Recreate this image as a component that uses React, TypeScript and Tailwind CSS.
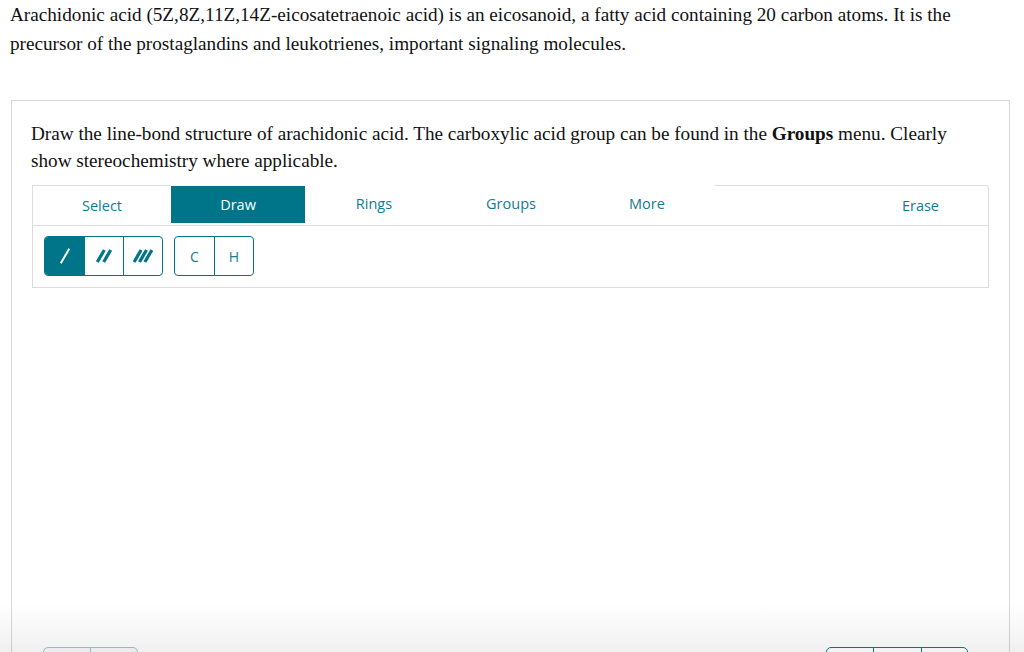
import React from "react";

const TEAL = "#00758a";

function BondIcon({ n, color }: { n: number; color: string }) {
  const offsets = n === 1 ? [0] : n === 2 ? [-3.2, 3.2] : [-5.4, 0, 5.4];
  const sw = n === 1 ? 2 : 3.2;
  const len = n === 1 ? 17 : 14;
  return (
    <svg width="26" height="26" viewBox="0 0 26 26">
      {offsets.map((o, i) => {
        const cx = 13 + o;
        const cy = 13;
        const dx = len * 0.5 * 0.5;
        const dy = len * 0.5 * 0.866;
        return (
          <line
            key={i}
            x1={cx - dx}
            y1={cy + dy}
            x2={cx + dx}
            y2={cy - dy}
            stroke={color}
            strokeWidth={sw}
            strokeLinecap="butt"
          />
        );
      })}
    </svg>
  );
}

export default function App() {
  const serif = { fontFamily: '"Liberation Serif", "Times New Roman", serif' };
  const sans = { fontFamily: '"Open Sans", "Noto Sans", sans-serif' };
  return (
    <div className="relative h-[652px] w-[1024px] overflow-hidden bg-white">
      <p
        className="pl-[10px] pr-[40px] text-[19.2px] leading-[29px] text-[#111]"
        style={serif}
      >
        Arachidonic acid (5Z,8Z,11Z,14Z-eicosatetraenoic acid) is an eicosanoid, a fatty acid containing 20 carbon atoms. It is the precursor of the prostaglandins and leukotrienes, important signaling molecules.
      </p>

      <div className="ml-[11px] mt-[42px] h-[700px] w-[999px] border border-[#d6d6d6] px-[20px] pt-[19px]">
        <p
          className="-ml-px pr-[30px] text-[19.2px] leading-[27px] text-[#111]"
          style={serif}
        >
          Draw the line-bond structure of arachidonic acid. The carboxylic acid group can be found in the <b>Groups</b> menu. Clearly show stereochemistry where applicable.
        </p>

        <div className="mt-[11px]" style={sans}>
          <div className="flex h-[41px] rounded-tr-[3px] border-b border-l border-r border-[#dcdcdc] text-[14.5px] text-[#137b91]">
            <div className="flex w-[138px] items-center justify-center border-t border-[#dcdcdc]">
              Select
            </div>
            <div className="mt-px flex h-[37px] w-[134px] items-center justify-center bg-[#00758a] text-white">
              Draw
            </div>
            <div className="flex w-[138px] items-center justify-center pb-[2px]">Rings</div>
            <div className="flex w-[136px] items-center justify-center pb-[2px]">Groups</div>
            <div className="flex w-[136px] items-center justify-center pb-[2px]">More</div>
            <div className="flex flex-1 items-center justify-end rounded-tr-[3px] border-t border-[#dcdcdc] pr-[49px]">
              Erase
            </div>
          </div>
          <div className="flex h-[62px] items-start gap-[11px] border-b border-l border-r border-[#dcdcdc] pl-[11px] pt-[10px]">
            <div className="flex h-[40px] overflow-hidden rounded-[4px] border border-[#00758a]">
              <div className="flex w-[39px] items-center justify-center bg-[#00758a]">
                <BondIcon n={1} color="#ffffff" />
              </div>
              <div className="flex w-[39px] items-center justify-center border-l border-[#00758a]">
                <BondIcon n={2} color={TEAL} />
              </div>
              <div className="flex w-[39px] items-center justify-center border-l border-[#00758a]">
                <BondIcon n={3} color={TEAL} />
              </div>
            </div>
            <div className="flex h-[40px] overflow-hidden rounded-[4px] border border-[#00758a] text-[14px] text-[#137b91]">
              <div className="flex w-[39px] items-center justify-center">C</div>
              <div className="flex w-[39px] items-center justify-center border-l border-[#00758a]">H</div>
            </div>
          </div>
        </div>
      </div>

      <div className="pointer-events-none absolute bottom-0 left-0 right-0 h-[48px] bg-gradient-to-b from-transparent to-black/[0.06]" />

      <div className="absolute left-[43px] top-[647px] flex h-[40px] w-[95px] overflow-hidden rounded-[5px] border border-[#94b9c3] bg-[#ececec]">
        <div className="w-[47px] border-r border-[#94b9c3]" />
        <div className="flex-1" />
      </div>
      <div className="absolute left-[826px] top-[647px] flex h-[40px] w-[142px] overflow-hidden rounded-[5px] border border-[#00758a] bg-[#f3f3f3]">
        <div className="w-[47px] border-r border-[#00758a]" />
        <div className="w-[48px] border-r border-[#00758a]" />
        <div className="flex-1" />
      </div>
    </div>
  );
}
